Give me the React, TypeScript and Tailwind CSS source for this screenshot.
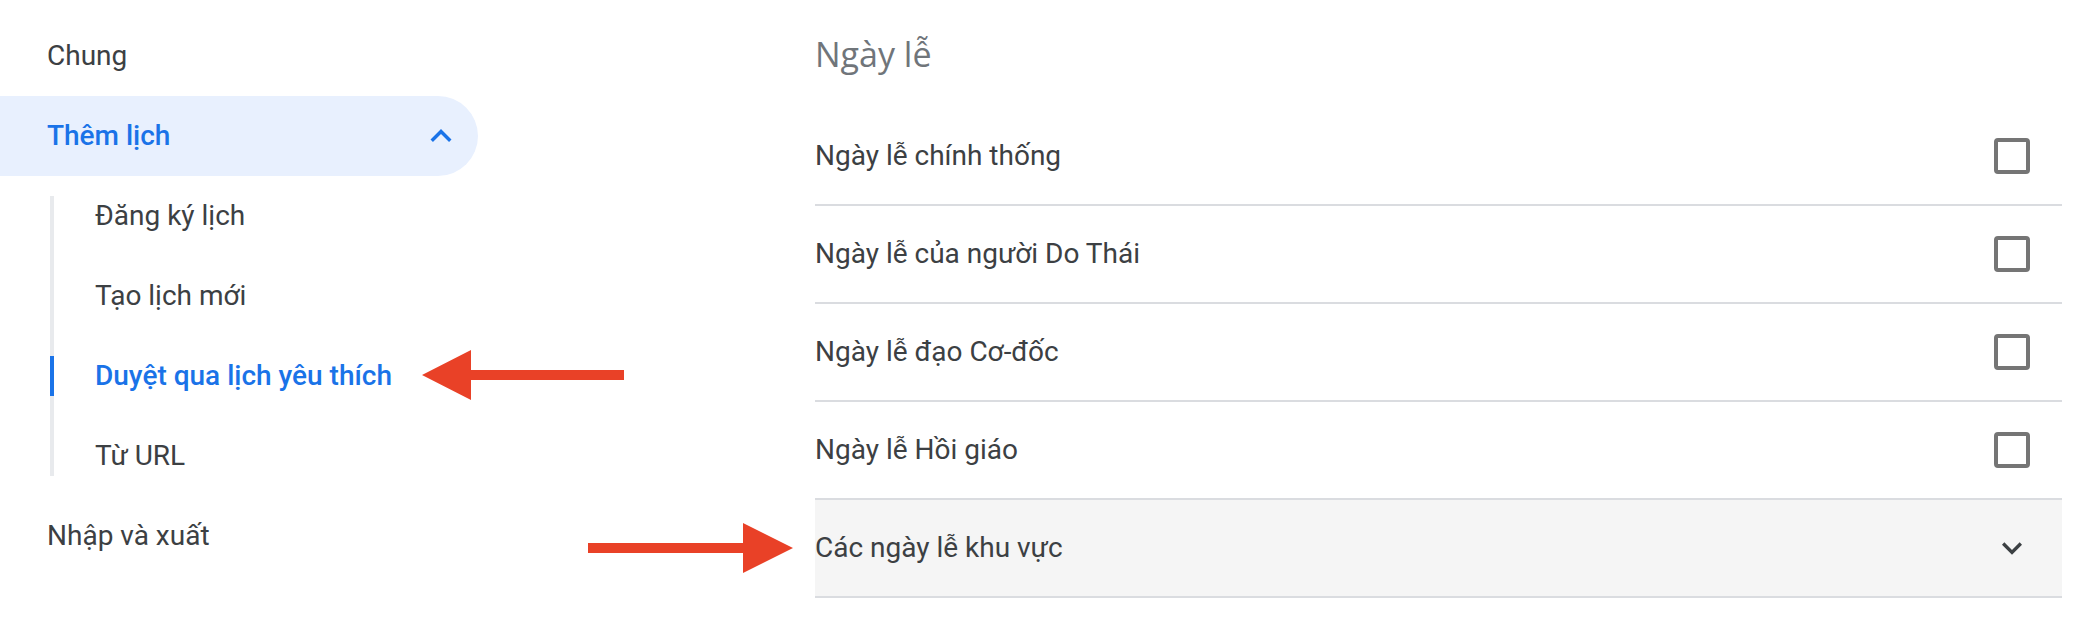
import { ReactNode } from 'react';

type SubLink = {
	label: string;
	active?: boolean;
};

const subLinks: SubLink[] = [
	{ label: 'Đăng ký lịch' },
	{ label: 'Tạo lịch mới' },
	{ label: 'Duyệt qua lịch yêu thích', active: true },
	{ label: 'Từ URL' },
];

const holidays = [
	'Ngày lễ chính thống',
	'Ngày lễ của người Do Thái',
	'Ngày lễ đạo Cơ-đốc',
	'Ngày lễ Hồi giáo',
];

const ExpandLess = ({ className }: { className?: string }) => (
	<svg viewBox="0 0 24 24" className={className} fill="currentColor">
		<path d="M12 8l-6 6 1.41 1.41L12 10.83l4.59 4.58L18 14z" />
	</svg>
);

const ExpandMore = ({ className }: { className?: string }) => (
	<svg viewBox="0 0 24 24" className={className} fill="currentColor">
		<path d="M16.59 8.59L12 13.17 7.41 8.59 6 10l6 6 6-6z" />
	</svg>
);

const Row = ({ children, shaded }: { children: ReactNode; shaded?: boolean }) => (
	<div
		className={`flex h-[98px] items-center justify-between border-b-2 border-[#dadce0] pr-[32px] ${shaded ? 'bg-[#f5f5f5]' : ''}`}
	>
		{children}
	</div>
);

const App = () => {
	return (
		<div className="relative flex h-[644px] w-[2090px] bg-white font-['Roboto','Noto_Sans',sans-serif] text-[28px] text-[#3c4043]">
			{/* left settings nav */}
			<nav className="flex w-[478px] shrink-0 flex-col pt-[16px]">
				<div className="flex h-[80px] items-center pl-[47px]">Chung</div>

				<div className="flex h-[80px] items-center justify-between rounded-r-full bg-[#e8f0fe] pl-[47px] pr-[16px] font-medium text-[#1a73e8]">
					<span>Thêm lịch</span>
					<ExpandLess className="h-[42px] w-[42px]" />
				</div>

				<div className="flex pl-[50px]">
					<div className="my-[20px] w-[4px] bg-[#e8eaed]">
						<div className="mt-[160px] h-[40px] bg-[#1a73e8]" />
					</div>
					<div className="flex flex-col pl-[41px]">
						{subLinks.map((link) => (
							<div
								key={link.label}
								className={`flex h-[80px] items-center ${link.active ? 'font-medium text-[#1a73e8]' : ''}`}
							>
								{link.label}
							</div>
						))}
					</div>
				</div>

				<div className="flex h-[80px] items-center pl-[47px]">Nhập và xuất</div>
			</nav>

			{/* holidays section */}
			<main className="ml-[337px] mr-[28px] flex flex-1 flex-col">
				<h2 className="flex h-[108px] items-center font-['Open_Sans',sans-serif] text-[34px] font-normal text-[#70757a]">
					Ngày lễ
				</h2>
				{holidays.map((name) => (
					<Row key={name}>
						<span>{name}</span>
						<div className="h-[36px] w-[36px] rounded-[4px] border-[4px] border-[#757575]" />
					</Row>
				))}
				<Row shaded>
					<span>Các ngày lễ khu vực</span>
					<ExpandMore className="mr-[-2px] h-[40px] w-[40px]" />
				</Row>
			</main>

			{/* annotation arrows */}
			<svg
				className="pointer-events-none absolute left-0 top-0"
				width="2090"
				height="644"
				viewBox="0 0 2090 644"
			>
				<polygon
					fill="#e94127"
					points="422,375 471,350 471,370 624,370 624,380 471,380 471,400"
				/>
				<polygon
					fill="#e94127"
					points="588,543 743,543 743,523 793,548 743,573 743,553 588,553"
				/>
			</svg>
		</div>
	);
};

export default App;
